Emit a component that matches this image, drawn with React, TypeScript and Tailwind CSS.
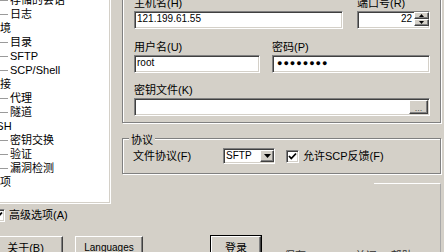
import React from 'react';

const sunken = 'bg-white border border-t-[#808080] border-l-[#808080] border-b-white border-r-white shadow-[inset_1px_1px_0_#404040,inset_-1px_-1px_0_#d4d0c8]';
const raised = 'bg-[#d4d0c8] border border-t-white border-l-white border-b-[#404040] border-r-[#404040] shadow-[inset_-1px_-1px_0_#808080]';
const etched = 'border border-[#808080] shadow-[inset_1px_1px_0_#fff,1px_1px_0_#fff]';

const treeItems: { label: string; child?: boolean }[] = [
  { label: '存储的会话', child: true },
  { label: '日志', child: true },
  { label: '环境' },
  { label: '目录', child: true },
  { label: 'SFTP', child: true },
  { label: 'SCP/Shell', child: true },
  { label: '连接' },
  { label: '代理', child: true },
  { label: '隧道', child: true },
  { label: 'SSH' },
  { label: '密钥交换', child: true },
  { label: '验证', child: true },
  { label: '漏洞检测', child: true },
  { label: '选项' },
];

function Check() {
  return (
    <svg width="9" height="9" viewBox="0 0 9 9">
      <path d="M1 4 L3.3 6.5 L8 1.5" fill="none" stroke="#000" strokeWidth="1.8" />
    </svg>
  );
}

function CheckBox() {
  return (
    <div className={`${sunken} w-[13px] h-[13px] shrink-0 flex items-center justify-center`}>
      <Check />
    </div>
  );
}

function Tree() {
  return (
    <div className="w-[111px] h-full bg-white border-r border-b border-white shadow-[inset_-1px_-1px_0_#d4d0c8] overflow-hidden">
      <div className="-mt-[7px]">
        {treeItems.map(item => (
          <div key={item.label} className="h-[14px] flex items-center whitespace-nowrap">
            {item.child ? <>
              <span className="w-[8px] h-px bg-[#9a9a9a] shrink-0" />
              <span className="ml-[2px]">{item.label}</span>
            </> : (
              <span className="-ml-[11px]">{item.label}</span>
            )}
          </div>
        ))}
      </div>
    </div>
  );
}

function Field({ label, children }: { label: string; children: React.ReactNode }) {
  return (
    <div className="flex flex-col">
      <div className="h-[14px] whitespace-nowrap">{label}</div>
      <div className="mt-[1px]">{children}</div>
    </div>
  );
}

export default function App() {
  return (
    <div className="w-[444px] h-[252px] overflow-hidden bg-[#d4d0c8] text-[11px] leading-[14px] text-black font-['Liberation_Sans','Noto_Sans_CJK_SC',sans-serif]">
      <div className="flex h-[204px]">
        <Tree />

        <div className="flex-1 pl-[11px] pr-[3px] flex flex-col">
          {/* session */}
          <div className={`${etched} -mt-[12px] pt-[7px] pl-[11px] pb-[6px]`}>
            <div className="flex gap-[14px]">
              <div className="w-[209px]">
                <Field label="主机名(H)">
                  <div className={`${sunken} h-[18px] px-[2px] text-[10px] leading-[14px]`}>121.199.61.55</div>
                </Field>
              </div>
              <div className="w-[73px]">
                <Field label="端口号(R)">
                  <div className={`${sunken} h-[18px] flex text-[10px]`}>
                    <div className="flex-1 text-right pr-[2px] leading-[14px]">22</div>
                    <div className="w-[15px] flex flex-col">
                      <div className={`${raised} h-[7px] flex items-center justify-center`}>
                        <svg width="5" height="3" viewBox="0 0 5 3"><polygon points="2.5,0 5,3 0,3" fill="#000" /></svg>
                      </div>
                      <div className={`${raised} h-[7px] flex items-center justify-center`}>
                        <svg width="5" height="3" viewBox="0 0 5 3"><polygon points="0,0 5,0 2.5,3" fill="#000" /></svg>
                      </div>
                    </div>
                  </div>
                </Field>
              </div>
            </div>

            <div className="flex gap-[12px] mt-[11px]">
              <div className="w-[126px]">
                <Field label="用户名(U)">
                  <div className={`${sunken} h-[18px] px-[2px] text-[10px] leading-[14px]`}>root</div>
                </Field>
              </div>
              <div className="w-[158px]">
                <Field label="密码(P)">
                  <div className={`${sunken} h-[18px] px-[4px] text-[9px] leading-[14px] tracking-[1px]`}>●●●●●●●●</div>
                </Field>
              </div>
            </div>

            <div className="w-[296px] mt-[10px]">
              <Field label="密钥文件(K)">
                <div className={`${sunken} h-[18px] flex items-center justify-end pr-[1px]`}>
                  <div className={`${raised} w-[19px] h-[14px] flex items-end justify-center text-[9px] leading-[10px] text-[#555]`}>...</div>
                </div>
              </Field>
            </div>
          </div>

          {/* protocol */}
          <div className={`${etched} relative mt-[15px] pt-[9px] pb-[9px] pl-[10px]`}>
            <span className="absolute -top-[6px] left-[6px] px-[2px] bg-[#d4d0c8]">协议</span>
            <div className="flex items-center h-[16px]">
              <span className="w-[90px]">文件协议(F)</span>
              <div className={`${sunken} w-[52px] h-[16px] flex items-center`}>
                <span className="pl-[2px] text-[10px]">SFTP</span>
                <div className={`${raised} ml-auto w-[14px] h-[12px] flex items-center justify-center`}>
                  <svg width="7" height="4" viewBox="0 0 7 4"><polygon points="0,0 7,0 3.5,4" fill="#000" /></svg>
                </div>
              </div>
              <div className="ml-[11px]"><CheckBox /></div>
              <span className="ml-[4px]">允许SCP反馈(F)</span>
            </div>
          </div>

          <div className="mt-[9px] ml-[252px] h-[80px] shrink-0 border-t border-t-white border-r border-r-[#a8a8a8]" />
        </div>
      </div>

      <div className="flex items-center h-[14px] mt-[4px]">
        <div className="-ml-[8px]"><CheckBox /></div>
        <span className="ml-[4px]">高级选项(A)</span>
      </div>

      <div className="flex mt-[14px]">
        <div className={`${raised} -ml-[12px] w-[75px] h-[23px] flex justify-center pt-[4px]`}>关于(B)</div>
        <div className={`${raised} ml-[12px] w-[68px] h-[23px] flex justify-center pt-[4px] text-[10px]`}>Languages</div>
        <div className="ml-[67px] -mt-[1px] w-[52px] h-[24px] border border-black">
          <div className={`${raised} h-full flex justify-center pt-[4px]`}>登录</div>
        </div>
        <div className="ml-[13px] mt-[13px] flex gap-[14px] text-[#333] whitespace-nowrap">
          <span>▾ 保存(S)</span>
          <span>▾</span>
          <span>关闭</span>
          <span>帮助(H)</span>
        </div>
      </div>
    </div>
  );
}
